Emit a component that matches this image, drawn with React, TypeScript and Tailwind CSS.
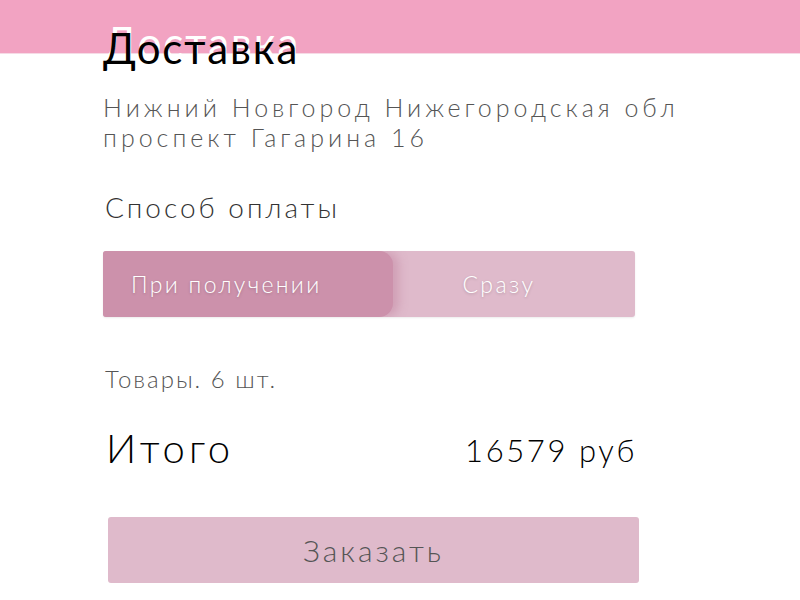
export default function App() {
  return (
    <div
      className="relative h-[600px] w-[800px] overflow-hidden bg-white"
      style={{ fontFamily: "Lato, 'Open Sans', sans-serif" }}
    >
      <div className="h-[54px] w-full bg-[#f2a3c2] border-b border-[#f6dbe6]" />

      <div className="-mt-[30px] pl-[103px]">
        <h1 className="text-[42px] font-normal leading-[48px] tracking-[1.9px] text-black [text-shadow:1px_-6px_0_#ffffff]">
          Доставка
        </h1>

        <div className="mt-[20px] text-[25px] font-light leading-[30px] tracking-[4px] text-[#555555]">
          <p>Нижний Новгород Нижегородская обл</p>
          <p>проспект Гагарина 16</p>
        </div>

        <p className="mt-[39px] pl-[2px] text-[28px] font-light leading-[32px] tracking-[3px] text-[#333333]">
          Способ оплаты
        </p>

        <div className="mt-[28px] flex h-[66px] w-[532px] overflow-hidden rounded-[3px] bg-[#dfbacb] shadow-[0_1px_2px_rgba(0,0,0,0.08)]">
          <div className="flex w-[290px] items-center rounded-r-[14px] bg-[#cc91ab] pl-[28px] shadow-[6px_0_10px_rgba(180,110,140,0.35)]">
            <span className="text-[23px] font-light tracking-[2.3px] text-white [text-shadow:0_1px_3px_rgba(0,0,0,0.2)]">
              При получении
            </span>
          </div>
          <div className="flex flex-1 items-center justify-center pr-[30px]">
            <span className="text-[23px] font-light tracking-[2.5px] text-white [text-shadow:0_1px_3px_rgba(0,0,0,0.2)]">
              Сразу
            </span>
          </div>
        </div>

        <p className="mt-[49px] pl-[2px] text-[24px] font-light leading-[26px] tracking-[2px] text-[#555555]">
          Товары. 6 шт.
        </p>

        <div className="mt-[34px] flex w-[534px] items-end justify-between pl-[3px]">
          <span className="text-[40px] font-light leading-[44px] tracking-[4px] text-black">
            Итого
          </span>
          <span className="mb-[2px] text-[31px] font-light leading-[36px] tracking-[2.6px] text-black">
            16579 руб
          </span>
        </div>

        <button className="mt-[47px] ml-[5px] flex h-[66px] w-[531px] items-center justify-center rounded-[3px] bg-[#dfbacb]">
          <span className="text-[30px] font-light tracking-[3px] text-[#555555]">
            Заказать
          </span>
        </button>
      </div>
    </div>
  );
}
